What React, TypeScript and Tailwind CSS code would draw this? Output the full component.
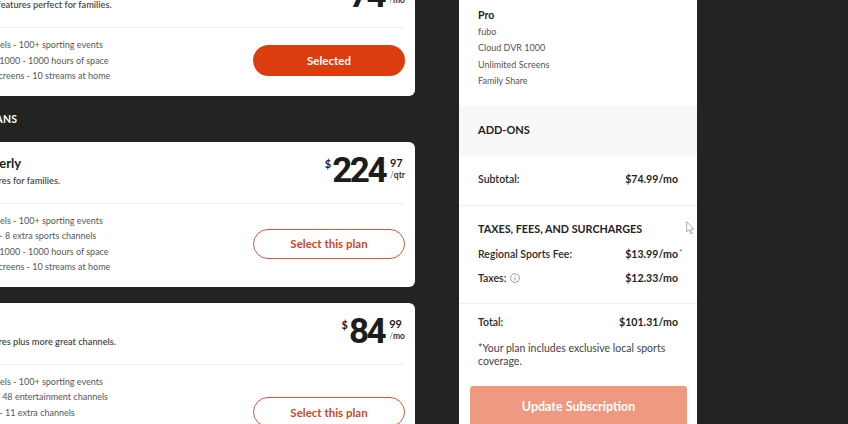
import React from "react";

type Plan = {
  title: string;
  desc: string;
  dollars: string;
  cents: string;
  unit: string;
  features: string[];
  selected?: boolean;
};

function Price({ dollars, cents, unit }: { dollars: string; cents: string; unit: string }) {
  return (
    <div className="flex items-start text-[#1c1c1c]">
      <span className="text-[11px] font-bold leading-none mt-[2px] mr-[1px]">$</span>
      <span className="text-[35px] font-bold leading-[30px] tracking-[-2.5px] font-['Roboto',sans-serif]">
        {dollars}
      </span>
      <div className="flex flex-col items-start ml-[5px]">
        <span className="text-[11px] font-bold leading-[12px] mt-[1px]">{cents}</span>
        <span className="text-[8.5px] font-bold leading-[12px] text-[#333]">
          <span className="font-normal text-[#777]">/</span>
          {unit}
        </span>
      </div>
    </div>
  );
}

function Check() {
  return (
    <svg width="8" height="8" viewBox="0 0 8 8" className="mr-[3px] shrink-0">
      <path d="M1 4.2 L3.1 6.2 L7 1.8" fill="none" stroke="#dc3c0e" strokeWidth="1.2" />
    </svg>
  );
}

function PlanCard({ plan }: { plan: Plan }) {
  return (
    <div className="bg-white rounded-[6px] pl-[22px] pr-[10px]">
      <div className="flex items-center justify-between pt-[13px] pb-[15px] border-b border-[#efefef]">
        <div className="flex flex-col">
          <span className="text-[13px] font-bold leading-[16px] text-[#1c1c1c]">{plan.title}</span>
          <span className="text-[9.2px] font-semibold leading-[14px] mt-[3px] text-[#4a4a4a]">{plan.desc}</span>
        </div>
        <Price dollars={plan.dollars} cents={plan.cents} unit={plan.unit} />
      </div>
      <div className="flex items-center justify-between pt-[9px] pb-[12px]">
        <ul className="flex flex-col">
          {plan.features.map((f) => (
            <li key={f} className="flex items-center text-[9px] leading-[15.5px] text-[#585858]">
              <Check />
              {f}
            </li>
          ))}
        </ul>
        {plan.selected ? (
          <button className="w-[152px] h-[31px] rounded-full bg-[#dc3c0e] text-white text-[11.5px] font-bold">
            Selected
          </button>
        ) : (
          <button className="w-[152px] h-[30px] rounded-full border-[1.5px] border-[#d2573a] text-[#c9482a] text-[11.5px] font-bold">
            Select this plan
          </button>
        )}
      </div>
    </div>
  );
}

const plans: Plan[] = [
  {
    title: "Pro Monthly",
    desc: "All of the Pro features perfect for families.",
    dollars: "74",
    cents: "99",
    unit: "mo",
    selected: true,
    features: [
      "200+ channels - 100+ sporting events",
      "Cloud DVR 1000 - 1000 hours of space",
      "Unlimited Screens - 10 streams at home",
    ],
  },
  {
    title: "Pro Quarterly",
    desc: "All of its features for families.",
    dollars: "224",
    cents: "97",
    unit: "qtr",
    features: [
      "200+ channels - 100+ sporting events",
      "Sports Plus - 8 extra sports channels",
      "Cloud DVR 1000 - 1000 hours of space",
      "Unlimited Screens - 10 streams at home",
    ],
  },
  {
    title: "Elite",
    desc: "All of its features plus more great channels.",
    dollars: "84",
    cents: "99",
    unit: "mo",
    features: [
      "200+ channels - 100+ sporting events",
      "fubo Extra - 48 entertainment channels",
      "Sports Plus - 11 extra channels",
      "Cloud DVR 1000 - 1000 hours of space",
      "Unlimited Screens - 10 streams at home",
    ],
  },
];

function InfoIcon() {
  return (
    <svg width="10" height="10" viewBox="0 0 10 10" className="inline-block ml-[4px] -mt-[1px]">
      <circle cx="5" cy="5" r="4.4" fill="none" stroke="#8a8a8a" strokeWidth="0.8" />
      <line x1="5" y1="4.3" x2="5" y2="7.4" stroke="#8a8a8a" strokeWidth="0.9" />
      <circle cx="5" cy="2.8" r="0.55" fill="#8a8a8a" />
    </svg>
  );
}

function Row({ label, value, extra }: { label: React.ReactNode; value: string; extra?: React.ReactNode }) {
  return (
    <div className="flex items-center justify-between leading-[16px]">
      <span className="text-[10.5px] font-semibold text-[#2a2a2a]">{label}</span>
      <span className="relative text-[10.6px] font-bold text-[#1f1f1f]">
        {value}
        {extra}
      </span>
    </div>
  );
}

export default function App() {
  return (
    <div className="relative w-[848px] h-[424px] overflow-hidden bg-[#212421] font-['Lato','Inter',sans-serif]">
      <div className="flex items-start -mt-[34px]">
        <div className="w-[495px] -ml-[80px] flex flex-col">
          <PlanCard plan={plans[0]} />
          <div className="mt-[16px] mb-[16px] pl-[24px] text-[10.5px] font-bold leading-[14px] text-white tracking-[0.2px]">
            OTHER PLANS
          </div>
          <PlanCard plan={plans[1]} />
          <div className="mt-[16px]">
            <PlanCard plan={plans[2]} />
          </div>
        </div>

        <div className="ml-[44px] w-[238px] bg-white flex flex-col">
          <div className="px-[19px] pt-[41px] pb-[16px] flex flex-col">
            <span className="text-[10.5px] font-bold leading-[16.5px] text-[#1f1f1f]">Pro</span>
            {["fubo", "Cloud DVR 1000", "Unlimited Screens", "Family Share"].map((t) => (
              <span key={t} className="text-[9px] leading-[16.5px] text-[#555]">
                {t}
              </span>
            ))}
          </div>
          <div className="h-[50px] bg-[#f8f8f8] px-[19px] flex items-center">
            <span className="text-[11px] font-bold text-[#232323]">ADD-ONS</span>
          </div>
          <div className="h-[49px] pb-[2px] px-[19px] flex flex-col justify-center">
            <Row label="Subtotal:" value="$74.99/mo" />
          </div>
          <div className="border-t border-[#eeeeee] px-[19px] pt-[15px] pb-[17px] flex flex-col">
            <span className="text-[10.8px] font-bold leading-[16px] text-[#232323]">
              TAXES, FEES, AND SURCHARGES
            </span>
            <div className="mt-[9px]">
              <Row
                label="Regional Sports Fee:"
                value="$13.99/mo"
                extra={
                  <span className="absolute left-full top-[-2px] ml-[1px] text-[8px] text-[#4d7fc4]">*</span>
                }
              />
            </div>
            <div className="mt-[8px]">
              <Row
                label={
                  <>
                    Taxes:
                    <InfoIcon />
                  </>
                }
                value="$12.33/mo"
              />
            </div>
          </div>
          <div className="border-t border-[#eeeeee] pt-[10px] flex flex-col">
            <div className="px-[19px]">
              <Row label="Total:" value="$101.31/mo" />
              <p className="mt-[12px] text-[10.5px] leading-[13.5px] text-[#444]">
                *Your plan includes exclusive local sports coverage.
              </p>
            </div>
            <div className="mt-[17px] ml-[11px] mr-[10px]">
              <button className="w-full h-[43px] rounded-[3px] bg-[#ee9a80] text-white text-[12.5px] font-bold">
                Update Subscription
              </button>
            </div>
          </div>
        </div>
      </div>

      <svg className="absolute left-[686px] top-[221px]" width="9" height="14" viewBox="0 0 9 14">
        <path
          d="M0.7 0.7 L0.7 11 L3.1 8.7 L4.9 12.8 L6.3 12.2 L4.5 8.2 L7.8 8.2 Z"
          fill="#ffffff"
          stroke="#9a9a9a"
          strokeWidth="0.8"
          strokeLinejoin="round"
        />
      </svg>
    </div>
  );
}
